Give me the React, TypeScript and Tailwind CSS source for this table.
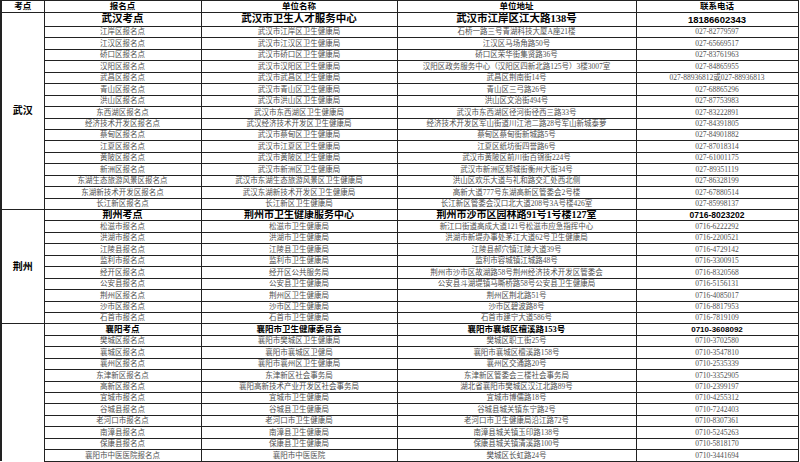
import React from "react"

type Row = [string, string, string, string]

interface Section {
  name: string
  head: Row
  headSize: "lg" | "md" | "sm"
  rows: Row[]
}

const sections: Section[] = [
  {
    name: "武汉",
    headSize: "lg",
    head: ["武汉考点", "武汉市卫生人才服务中心", "武汉市江岸区江大路138号", "18186602343"],
    rows: [
      ["江岸区报名点", "武汉市江岸区卫生健康局", "石桥一路三号青湖科技大厦A座21楼", "027-82779597"],
      ["江汉区报名点", "武汉市江汉区卫生健康局", "江汉区马场角路50号", "027-65669517"],
      ["硚口区报名点", "武汉市硚口区卫生健康局", "硚口区荣华街集贤路36号", "027-83761963"],
      ["汉阳区报名点", "武汉市汉阳区卫生健康局", "汉阳区政务服务中心（汉阳区四新北路125号）3楼3007室", "027-84865955"],
      ["武昌区报名点", "武汉市武昌区卫生健康局", "武昌区荆南街14号", "027-88936812或027-88936813"],
      ["青山区报名点", "武汉市青山区卫生健康局", "青山区三弓路26号", "027-68865296"],
      ["洪山区报名点", "武汉市洪山区卫生健康局", "洪山区文治街494号", "027-87753983"],
      ["东西湖区报名点", "武汉市东西湖区卫生健康局", "武汉市东西湖区径河街径西三路33号", "027-83222891"],
      ["经济技术开发区报名点", "武汉经济技术开发区卫生健康局", "经济技术开发区军山街道川江池二路28号军山新城泰萝", "027-84391805"],
      ["蔡甸区报名点", "武汉市蔡甸区卫生健康局", "蔡甸区蔡甸街新城路5号", "027-84901882"],
      ["江夏区报名点", "武汉市江夏区卫生健康局", "江夏区纸坊街四誉路6号", "027-87018314"],
      ["黄陂区报名点", "武汉市黄陂区卫生健康局", "武汉市黄陂区前川街百锦街224号", "027-61001175"],
      ["新洲区报名点", "武汉市新洲区卫生健康局", "武汉市新洲区邾城街衡州大街34号", "027-89351119"],
      ["东湖生态旅游风景区报名点", "武汉市东湖生态旅游风景区卫生健康局", "洪山区欢乐大道与礼和路交汇处西北侧", "027-86328199"],
      ["东湖新技术开发区报名点", "武汉东湖新技术开发区卫生健康局", "高新大道777号东湖高新区管委会2号楼", "027-67880514"],
      ["长江新区报名点", "长江新区卫生健康局", "长江新区管委会汉口北大道208号3A号楼426室", "027-85998137"],
    ],
  },
  {
    name: "荆州",
    headSize: "md",
    head: ["荆州考点", "荆州市卫生健康服务中心", "荆州市沙市区园林路91号1号楼127室", "0716-8023202"],
    rows: [
      ["松滋市报名点", "松滋市卫生健康局", "新江口街道高成大道121号松滋市应急指挥中心", "0716-6222292"],
      ["洪湖市报名点", "洪湖市卫生健康局", "洪湖市新堤办事处茅江大道62号卫生健康局", "0716-2200521"],
      ["江陵县报名点", "江陵县卫生健康局", "江陵县郝穴镇江陵大道39号", "0716-4729142"],
      ["监利市报名点", "监利市卫生健康局", "监利市容城镇江城路48号", "0716-3300915"],
      ["经开区报名点", "经开区公共服务局", "荆州市沙市区故湖路58号荆州经济技术开发区管委会", "0716-8320568"],
      ["公安县报名点", "公安县卫生健康局", "公安县斗湖堤镇马嘶桥路58号公安县卫生健康局", "0716-5156131"],
      ["荆州区报名点", "荆州区卫生健康局", "荆州区荆北路51号", "0716-4085017"],
      ["沙市区报名点", "沙市区卫生健康局", "沙市区碧波路8号", "0716-8817953"],
      ["石首市报名点", "石首市卫生健康局", "石首市建宁大道586号", "0716-7819109"],
    ],
  },
  {
    name: "",
    headSize: "sm",
    head: ["襄阳考点", "襄阳市卫生健康委员会", "襄阳市襄城区檀溪路153号", "0710-3608092"],
    rows: [
      ["樊城区报名点", "襄阳市樊城区卫生健康局", "樊城区职工街25号", "0710-3702580"],
      ["襄城区报名点", "襄阳市襄城区卫健局", "襄阳市襄城区檀溪路158号", "0710-3547810"],
      ["襄州区报名点", "襄阳市襄州区卫生健康局", "襄州区交通路20号", "0710-2535339"],
      ["东津新区报名点", "东津新区社会事务局", "东津新区管委会三楼社会事务局", "0710-3352905"],
      ["高新区报名点", "襄阳高新技术产业开发区社会事务局", "湖北省襄阳市樊城区汉江北路89号", "0710-2399197"],
      ["宜城市报名点", "宜城市卫生健康局", "宜城市博儒路18号", "0710-4255312"],
      ["谷城县报名点", "谷城县卫生健康局", "谷城县城关镇东宁路2号", "0710-7242403"],
      ["老河口市报名点", "老河口市卫生健康局", "老河口市卫生健康局沿江路72号", "0710-8307361"],
      ["南漳县报名点", "南漳县卫生健康局", "南漳县城关镇玉印路138号", "0710-5245263"],
      ["保康县报名点", "保康县卫生健康局", "保康县城关镇清溪路100号", "0710-5818170"],
      ["襄阳市中医医院报名点", "襄阳市中医医院", "樊城区长虹路24号", "0710-3441694"],
    ],
  },
]

const td = "border border-[#222] p-0 text-center align-middle whitespace-nowrap overflow-hidden"

function HeadRow({ row, size }: { row: Row; size: Section["headSize"] }) {
  const cjk =
    size === "lg" ? "text-[10.5px]" : size === "md" ? "text-[10px]" : "text-[8.5px]"
  const phone =
    size === "lg" ? "text-[9.5px]" : size === "md" ? "text-[8.5px]" : "text-[8px]"
  return (
    <>
      <td className={`${td} ${cjk} font-bold text-black`}>{row[0]}</td>
      <td className={`${td} ${cjk} font-bold text-black`}>{row[1]}</td>
      <td className={`${td} ${cjk} font-bold text-black`}>{row[2]}</td>
      <td
        className={`${td} ${phone} font-semibold text-black font-['Liberation_Sans','Noto_Sans_CJK_SC',sans-serif]`}
      >
        {row[3]}
      </td>
    </>
  )
}

function SectionRows({ section, last }: { section: Section; last: boolean }) {
  const span = section.rows.length + 1
  return (
    <>
      <tr className={section.headSize === "lg" ? "h-[14px]" : "h-[11.45px]"}>
        <td
          rowSpan={span}
          className={`${td} border-l-2 text-[10px] font-bold text-black ${last ? "border-b-0" : ""}`}
        >
          {section.name}
        </td>
        <HeadRow row={section.head} size={section.headSize} />
      </tr>
      {section.rows.map((r) => (
        <tr key={r[0]} className="h-[11.45px]">
          {r.map((c, i) => (
            <td key={i} className={`${td} text-[7.5px] text-[#505050]`}>
              {c}
            </td>
          ))}
        </tr>
      ))}
    </>
  )
}

export default function App() {
  return (
    <div className="w-[800px] h-[462px] overflow-hidden bg-white font-['Liberation_Serif','Noto_Sans_CJK_SC',serif] leading-none">
      <table className="table-fixed border-collapse w-[797px]">
        <colgroup>
          <col className="w-[43px]" />
          <col className="w-[157px]" />
          <col className="w-[196px]" />
          <col className="w-[239px]" />
          <col className="w-[162px]" />
        </colgroup>
        <thead>
          <tr className="h-[12px]">
            {["考点", "报名点", "单位名称", "单位地址", "联系电话"].map((h, i) => (
              <th
                key={h}
                className={`${td} ${i === 0 ? "border-l-2" : ""} text-[8.5px] font-bold text-black`}
              >
                {h}
              </th>
            ))}
          </tr>
        </thead>
        <tbody>
          {sections.map((s, i) => (
            <SectionRows key={s.head[0]} section={s} last={i === sections.length - 1} />
          ))}
        </tbody>
      </table>
    </div>
  )
}
